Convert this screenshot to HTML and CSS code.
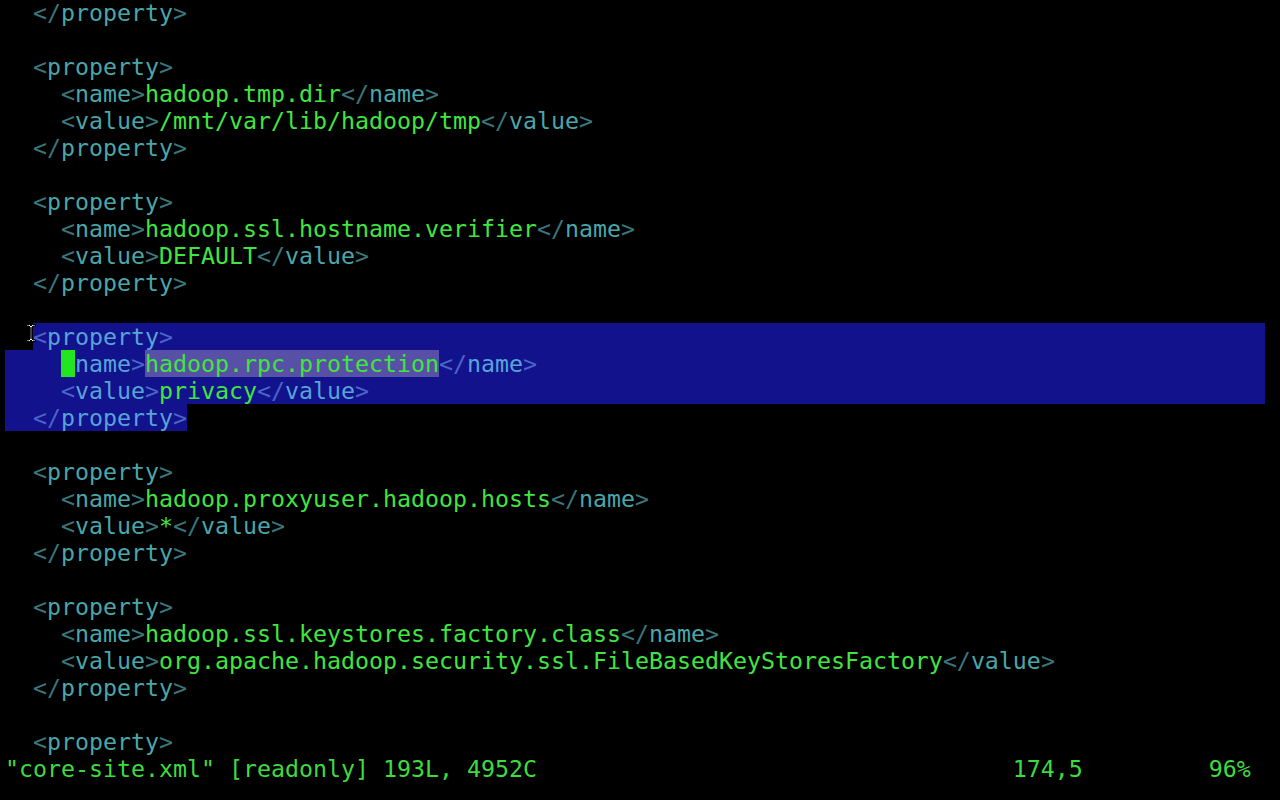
FILE: index.html
```html
<!DOCTYPE html>
<html>
<head>
<meta charset="utf-8">
<link rel="stylesheet" href="styles.css">
</head>
<body>
<div class="term">
<div class="ln">  <span class="b">&lt;/</span><span class="t">property</span><span class="b">&gt;</span></div>
<div class="ln"></div>
<div class="ln">  <span class="b">&lt;</span><span class="t">property</span><span class="b">&gt;</span></div>
<div class="ln">    <span class="b">&lt;</span><span class="t">name</span><span class="b">&gt;</span><span class="v">hadoop.tmp.dir</span><span class="b">&lt;/</span><span class="t">name</span><span class="b">&gt;</span></div>
<div class="ln">    <span class="b">&lt;</span><span class="t">value</span><span class="b">&gt;</span><span class="v">/mnt/var/lib/hadoop/tmp</span><span class="b">&lt;/</span><span class="t">value</span><span class="b">&gt;</span></div>
<div class="ln">  <span class="b">&lt;/</span><span class="t">property</span><span class="b">&gt;</span></div>
<div class="ln"></div>
<div class="ln">  <span class="b">&lt;</span><span class="t">property</span><span class="b">&gt;</span></div>
<div class="ln">    <span class="b">&lt;</span><span class="t">name</span><span class="b">&gt;</span><span class="v">hadoop.ssl.hostname.verifier</span><span class="b">&lt;/</span><span class="t">name</span><span class="b">&gt;</span></div>
<div class="ln">    <span class="b">&lt;</span><span class="t">value</span><span class="b">&gt;</span><span class="v">DEFAULT</span><span class="b">&lt;/</span><span class="t">value</span><span class="b">&gt;</span></div>
<div class="ln">  <span class="b">&lt;/</span><span class="t">property</span><span class="b">&gt;</span></div>
<div class="ln"></div>
<div class="ln split"><span class="pad">  </span><span class="sel grow"><span class="b">&lt;</span><span class="t">property</span><span class="b">&gt;</span></span></div>
<div class="ln sel">    <span class="cur">&lt;</span><span class="t">name</span><span class="b">&gt;</span><span class="v hl">hadoop.rpc.protection</span><span class="b">&lt;/</span><span class="t">name</span><span class="b">&gt;</span></div>
<div class="ln sel">    <span class="b">&lt;</span><span class="t">value</span><span class="b">&gt;</span><span class="v">privacy</span><span class="b">&lt;/</span><span class="t">value</span><span class="b">&gt;</span></div>
<div class="ln"><span class="sel">  <span class="b">&lt;/</span><span class="t">property</span><span class="b">&gt;</span></span></div>
<div class="ln"></div>
<div class="ln">  <span class="b">&lt;</span><span class="t">property</span><span class="b">&gt;</span></div>
<div class="ln">    <span class="b">&lt;</span><span class="t">name</span><span class="b">&gt;</span><span class="v">hadoop.proxyuser.hadoop.hosts</span><span class="b">&lt;/</span><span class="t">name</span><span class="b">&gt;</span></div>
<div class="ln">    <span class="b">&lt;</span><span class="t">value</span><span class="b">&gt;</span><span class="v">*</span><span class="b">&lt;/</span><span class="t">value</span><span class="b">&gt;</span></div>
<div class="ln">  <span class="b">&lt;/</span><span class="t">property</span><span class="b">&gt;</span></div>
<div class="ln"></div>
<div class="ln">  <span class="b">&lt;</span><span class="t">property</span><span class="b">&gt;</span></div>
<div class="ln">    <span class="b">&lt;</span><span class="t">name</span><span class="b">&gt;</span><span class="v">hadoop.ssl.keystores.factory.class</span><span class="b">&lt;/</span><span class="t">name</span><span class="b">&gt;</span></div>
<div class="ln">    <span class="b">&lt;</span><span class="t">value</span><span class="b">&gt;</span><span class="v">org.apache.hadoop.security.ssl.FileBasedKeyStoresFactory</span><span class="b">&lt;/</span><span class="t">value</span><span class="b">&gt;</span></div>
<div class="ln">  <span class="b">&lt;/</span><span class="t">property</span><span class="b">&gt;</span></div>
<div class="ln"></div>
<div class="ln">  <span class="b">&lt;</span><span class="t">property</span><span class="b">&gt;</span></div>
<div class="ln status"><span class="msg">"core-site.xml" [readonly] 193L, 4952C</span><span class="pos">174,5</span><span class="pct">96%</span></div>
<svg class="ibeam" width="12" height="20" viewBox="0 0 12 20">
<path d="M1.5 1.5 H4.5 L6 3 L7.5 1.5 H10.5 V3 H8 L6.8 4.2 V15.8 L8 17 H10.5 V18.5 H7.5 L6 17 L4.5 18.5 H1.5 V17 H4 L5.2 15.8 V4.2 L4 3 H1.5 Z" fill="#fff" stroke="#000" stroke-width="1"/>
</svg>
</div>
</body>
</html>
```

FILE: styles.css
```css
html, body {
  margin: 0;
  padding: 0;
  background: #000;
}
.term {
  position: relative;
  width: 1280px;
  height: 800px;
  overflow: hidden;
  margin-top: -1px;
  padding-left: 5px;
  box-sizing: border-box;
  font-family: "DejaVu Sans Mono", "Liberation Mono", monospace;
  font-size: 23.25px;
  color: #3ee23e;
}
.ln {
  height: 27px;
  line-height: 27px;
  white-space: pre;
  width: 1260px;
}
.b { color: #3a767c; }
.t { color: #4ba6aa; }
.v { color: #40e640; }
.sel { background: #12128c; }
.sel .b { color: #4a64c8; }
.sel .t { color: #58a4d6; }
.split { display: flex; }
.pad { white-space: pre; }
.grow { flex: 1; }
.hl { background: #5850a6; }
.cur { background: #22e622; color: #22e622; }
.status { display: flex; color: #3ddc3d; }
.msg { width: 72ch; }
.pos { width: 14ch; }
.ibeam {
  position: absolute;
  left: 25px;
  top: 324px;
}
```
